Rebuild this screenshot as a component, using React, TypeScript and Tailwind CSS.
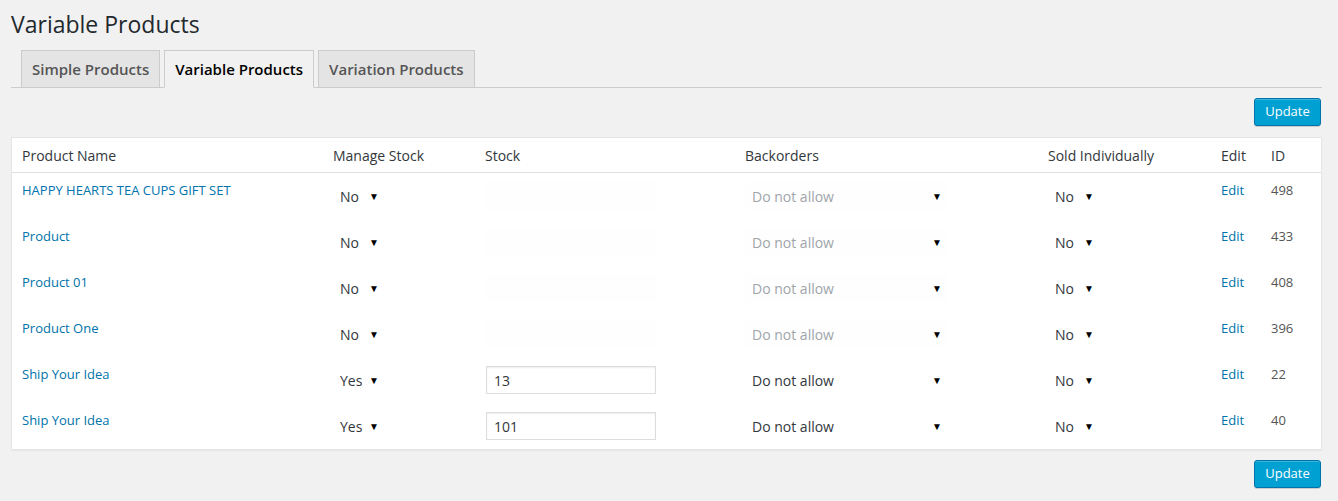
import React from 'react';

interface ProductRow {
  id: number;
  name: string;
  manageStock: 'Yes' | 'No';
  stock?: string;
  backorders: string;
  soldIndividually: 'Yes' | 'No';
}

const ROWS: ProductRow[] = [
  { id: 498, name: 'HAPPY HEARTS TEA CUPS GIFT SET', manageStock: 'No', backorders: 'Do not allow', soldIndividually: 'No' },
  { id: 433, name: 'Product', manageStock: 'No', backorders: 'Do not allow', soldIndividually: 'No' },
  { id: 408, name: 'Product 01', manageStock: 'No', backorders: 'Do not allow', soldIndividually: 'No' },
  { id: 396, name: 'Product One', manageStock: 'No', backorders: 'Do not allow', soldIndividually: 'No' },
  { id: 22, name: 'Ship Your Idea', manageStock: 'Yes', stock: '13', backorders: 'Do not allow', soldIndividually: 'No' },
  { id: 40, name: 'Ship Your Idea', manageStock: 'Yes', stock: '101', backorders: 'Do not allow', soldIndividually: 'No' },
];

const TABS = ['Simple Products', 'Variable Products', 'Variation Products'];

const HEADERS = ['Product Name', 'Manage Stock', 'Stock', 'Backorders', 'Sold Individually', 'Edit', 'ID'];

// same column template for header and rows
const GRID = 'grid grid-cols-[311px_152px_260px_303px_173px_50px_1fr]';

const Arrow = () => <span className="text-[10px] leading-none text-black">▼</span>;

// borderless wp-style select
const FakeSelect = ({ value, width, disabled }: { value: string; width: string; disabled?: boolean }) => (
  <div
    className={`flex h-[28px] items-center justify-between pl-[7px] pr-[6px] text-[14px] ${width} ${
      disabled ? 'bg-[#fefefe] text-[#a0a5aa]' : 'bg-white text-[#32373c]'
    }`}
  >
    <span>{value}</span>
    <Arrow />
  </div>
);

const UpdateButton = () => (
  <div className="flex justify-end pr-px">
    <button className="h-[28px] w-[67px] rounded-[3px] border border-[#0073aa] bg-[#00a0d2] text-[13px] text-white shadow-[inset_0_1px_0_rgba(120,200,230,0.5),0_1px_0_rgba(0,0,0,0.15)]">
      Update
    </button>
  </div>
);

export default function App() {
  return (
    <div
      className="min-h-[501px] bg-[#f1f1f1] pl-[11px] pr-[16px] pt-[10px] pb-[12px]"
      style={{ fontFamily: '"Open Sans", "Liberation Sans", sans-serif' }}
    >
      <h1 className="text-[23px] leading-[29px] text-[#23282d]">Variable Products</h1>

      <div className="mt-[11px] flex gap-[4px] border-b border-[#ccc] pl-[10px]">
        {TABS.map((tab) => {
          const active = tab === 'Variable Products';
          return (
            <div
              key={tab}
              className={`-mb-px flex h-[38px] items-center border px-[10px] text-[15px] font-semibold ${
                active
                  ? 'border-[#ccc] border-b-[#f1f1f1] bg-[#f1f1f1] text-black'
                  : 'border-[#ccc] bg-[#e4e4e4] text-[#555]'
              }`}
            >
              {tab}
            </div>
          );
        })}
      </div>

      <div className="mt-[10px]">
        <UpdateButton />
      </div>

      <div className="mt-[11px] w-[1311px] border border-[#e5e5e5] bg-white shadow-[0_1px_1px_rgba(0,0,0,0.04)]">
        <div className={`${GRID} h-[35px] items-center border-b border-[#e1e1e1] text-[14px] text-[#32373c]`}>
          {HEADERS.map((h) => (
            <div key={h} className="px-[10px]">
              {h}
            </div>
          ))}
        </div>

        {ROWS.map((row, i) => {
          const manages = row.manageStock === 'Yes';
          return (
            <div key={i} className={`${GRID} h-[46px] items-start text-[13px] leading-[19px]`}>
              <div className="px-[10px] pt-[8px]">
                <a className="text-[#0073aa]" href="#">
                  {row.name}
                </a>
              </div>
              <div className="px-[10px] pt-[9px]">
                <FakeSelect value={row.manageStock} width="w-[52px]" />
              </div>
              <div className="pl-[11px] pr-[10px] pt-[9px]">
                {manages ? (
                  <div className="flex h-[28px] w-[170px] items-center border border-[#ddd] bg-white px-[7px] text-[14px] text-[#32373c] shadow-[inset_0_1px_2px_rgba(0,0,0,0.07)]">
                    {row.stock}
                  </div>
                ) : (
                  <div className="h-[28px] w-[170px] bg-[#fefefe]" />
                )}
              </div>
              <div className="px-[10px] pt-[9px]">
                <FakeSelect value={row.backorders} width="w-[203px]" disabled={!manages} />
              </div>
              <div className="px-[10px] pt-[9px]">
                <FakeSelect value={row.soldIndividually} width="w-[52px]" />
              </div>
              <div className="px-[10px] pt-[8px]">
                <a className="text-[#0073aa]" href="#">
                  Edit
                </a>
              </div>
              <div className="px-[10px] pt-[8px] text-[#555]">{row.id}</div>
            </div>
          );
        })}
      </div>

      <div className="mt-[10px]">
        <UpdateButton />
      </div>
    </div>
  );
}
